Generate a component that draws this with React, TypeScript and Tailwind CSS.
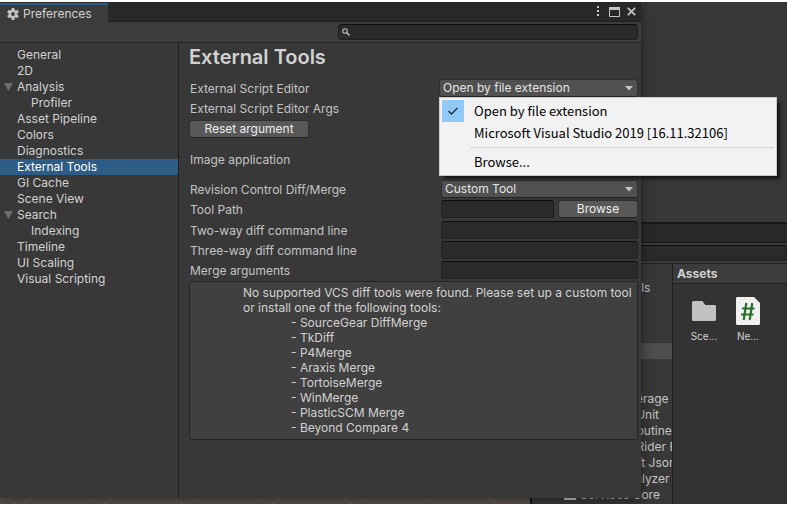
import type { ReactNode } from "react";

const sections: { name: string; nested?: boolean; open?: boolean; current?: boolean }[] = [
  { name: "General" },
  { name: "2D" },
  { name: "Analysis", open: true },
  { name: "Profiler", nested: true },
  { name: "Asset Pipeline" },
  { name: "Colors" },
  { name: "Diagnostics" },
  { name: "External Tools", current: true },
  { name: "GI Cache" },
  { name: "Scene View" },
  { name: "Search", open: true },
  { name: "Indexing", nested: true },
  { name: "Timeline" },
  { name: "UI Scaling" },
  { name: "Visual Scripting" },
];

const diffTools = [
  "SourceGear DiffMerge",
  "TkDiff",
  "P4Merge",
  "Araxis Merge",
  "TortoiseMerge",
  "WinMerge",
  "PlasticSCM Merge",
  "Beyond Compare 4",
];

const packages = [
  "Code Coverage",
  "Custom NUnit",
  "Editor Coroutines",
  "JetBrains Rider Editor",
  "Newtonsoft Json",
  "Profile Analyzer",
  "Services Core",
];

const fieldClass =
  "block h-[18px] w-full min-w-0 rounded-[3px] border border-[#212121] border-t-[#0d0d0d] bg-[#2a2a2a] px-1 text-[#d2d2d2] outline-none";
const buttonClass =
  "block h-[18px] rounded-[3px] border border-[#303030] border-b-[#242424] bg-[#585858] text-center leading-4 text-[#eeeeee]";

function GearIcon() {
  return (
    <svg className="size-3" viewBox="0 0 12 12" aria-hidden="true">
      <g fill="#c4c4c4">
        <rect x="4.6" y="0" width="2.8" height="12" rx=".5" />
        <rect x="4.6" y="0" width="2.8" height="12" rx=".5" transform="rotate(60 6 6)" />
        <rect x="4.6" y="0" width="2.8" height="12" rx=".5" transform="rotate(120 6 6)" />
        <circle cx="6" cy="6" r="4.4" />
      </g>
      <circle cx="6" cy="6" r="1.9" fill="#3c3c3c" />
    </svg>
  );
}

function FolderIcon({ className }: { className: string }) {
  return (
    <svg className={className} viewBox="0 0 24 20" aria-hidden="true">
      <path d="M1.5 0h8.2c.5 0 .8.1 1.1.5L13.3 4H22.500c.8 0 1.500.7 1.500 1.500v13c0 .8-.7 1.500-1.500 1.500h-21C.7 20 0 19.300 0 18.500v-17C0 .7.7 0 1.500 0Z" fill="#c2c2c2" />
    </svg>
  );
}

function ScriptIcon() {
  return (
    <svg className="h-7 w-6" viewBox="0 0 24 28" aria-hidden="true">
      <path d="M1.500 0H18l6 6v20.500c0 .8-.7 1.500-1.500 1.500h-21C.7 28 0 27.300 0 26.500v-25C0 .7.7 0 1.500 0Z" fill="#f0f0f0" />
      <path d="M10.300 6 7.700 23M16.300 6l-2.600 17M6 11.500h12.500M5 17.500h12.500" stroke="#2a6e2c" strokeWidth="2.200" fill="none" />
    </svg>
  );
}

function Dropdown({ id, value }: { id: string; value: string }) {
  return (
    <div className="relative">
      <select
        id={id}
        className="block h-[18px] w-full appearance-none rounded-[3px] border border-[#303030] border-b-[#242424] bg-[#515151] pl-[3px] leading-4 text-[#e4e4e4] outline-none"
      >
        <option>{value}</option>
      </select>
      <svg className="pointer-events-none absolute top-[7px] right-[5px] h-[5px] w-2" viewBox="0 0 8 5" aria-hidden="true">
        <path d="M0 0h8L4 4.500Z" fill="#c4c4c4" />
      </svg>
    </div>
  );
}

function Row({ label, htmlFor, children }: { label: string; htmlFor?: string; children?: ReactNode }) {
  return (
    <div className="flex h-5 items-start leading-5">
      {htmlFor ? (
        <label htmlFor={htmlFor} className="w-[252px] shrink-0 pl-px">{label}</label>
      ) : (
        <span className="w-[252px] shrink-0 pl-px">{label}</span>
      )}
      <div className="min-w-0 flex-1">{children}</div>
    </div>
  );
}

function EditorMenu() {
  return (
    <div
      role="menu"
      className="absolute top-full left-0 z-10 w-[338px] border border-[#cccccc] bg-[#f2f2f2] p-[2px] font-['Noto_Sans_CJK_SC',sans-serif] text-[13px] leading-[22px] text-black shadow-[4px_4px_3px_-1px_rgba(0,0,0,0.6)]"
    >
      <button role="menuitem" className="flex h-[22px] w-full items-center text-left">
        <span className="mr-[10px] flex size-[22px] items-center justify-center bg-[#91c9f7]">
          <svg className="size-3" viewBox="0 0 12 12" aria-hidden="true">
            <path d="m1.500 6 3 3 6-6" fill="none" stroke="#1f2d3a" strokeWidth="1.400" />
          </svg>
        </span>
        Open by file extension
      </button>
      <button role="menuitem" className="block h-[22px] w-full pl-8 text-left">
        Microsoft Visual Studio 2019 [16.11.32106]
      </button>
      <hr className="my-[3px] ml-7 border-[#d7d7d7]" />
      <button role="menuitem" className="block h-[22px] w-full pl-8 text-left">Browse...</button>
    </div>
  );
}

function PreferencesWindow() {
  return (
    <div className="absolute top-0 right-[146px] bottom-[6px] left-0 flex flex-col bg-[#383838] shadow-[0_2px_12px_rgba(0,0,0,0.45)]">
      <div className="flex h-5 shrink-0 items-stretch border-b border-[#1f1f1f] bg-[#282828]">
        <div className="mt-px -mb-px flex w-[108px] items-center gap-1 border-t-2 border-[#2c5d87] bg-[#3c3c3c] pl-[7px] text-[#d2d2d2]">
          <GearIcon />
          Preferences
        </div>
        <div className="ml-auto flex items-center gap-[7px] pr-[5px]">
          <button aria-label="Options">
            <svg className="h-[11px] w-[5px]" viewBox="0 0 5 11" fill="#c4c4c4" aria-hidden="true">
              <path d="M0 0h2v2H0zM0 4h2v2H0zM0 8h2v2H0z" />
            </svg>
          </button>
          <button aria-label="Maximize">
            <svg className="h-[10px] w-[11px]" viewBox="0 0 11 10" aria-hidden="true">
              <path d="M.5.500h10v9H.5z" fill="none" stroke="#c4c4c4" />
              <path d="M0 0h11v3H0z" fill="#c4c4c4" />
            </svg>
          </button>
          <button aria-label="Close">
            <svg className="size-[9px]" viewBox="0 0 9 9" aria-hidden="true">
              <path d="m.8.800 7.400 7.400M8.200.800.800 8.200" stroke="#c4c4c4" strokeWidth="1.700" />
            </svg>
          </button>
        </div>
      </div>

      <div className="flex h-[21px] shrink-0 items-start justify-end border-b border-[#232323] bg-[#3c3c3c] pt-[2px] pr-[3px]">
        <div className="relative w-[300px]">
          <input
            aria-label="Search preferences"
            className="block h-4 w-full rounded-[4px] border border-[#212121] border-t-[#0d0d0d] bg-[#2a2a2a] pl-4 text-[#d2d2d2] outline-none"
          />
          <svg className="absolute top-1 left-1 size-2" viewBox="0 0 8 8" fill="none" stroke="#c4c4c4" aria-hidden="true">
            <circle cx="3" cy="3" r="2.200" strokeWidth="1.100" />
            <path d="m4.700 4.700 2.800 2.800" strokeWidth="1.400" />
          </svg>
        </div>
      </div>

      <div className="flex min-h-0 flex-1">
        <nav className="w-[179px] shrink-0 border-r border-[#1f1f1f] pt-1 text-[#d2d2d2]">
          {sections.map((s) => (
            <a
              key={s.name}
              href="#"
              className={`flex h-4 items-center ${s.current ? "bg-[#2c5d87] text-white" : ""} ${s.nested ? "pl-[31px]" : s.open ? "pl-1" : "pl-[17px]"}`}
            >
              {s.open && (
                <svg className="mr-1 h-2 w-[9px]" viewBox="0 0 9 8" aria-hidden="true">
                  <path d="M0 0h9L4.500 8Z" fill="#6d6d6d" />
                </svg>
              )}
              {s.name}
            </a>
          ))}
        </nav>

        <main className="min-w-0 flex-1 pr-[3px] pl-[10px] text-[#c4c4c4]">
          <h1 className="pt-[2px] text-[20px] leading-6 font-semibold text-[#d2d2d2]">External Tools</h1>
          <div className="mt-[10px] flex h-5 items-start leading-5">
            <label htmlFor="editor" className="w-[250px] shrink-0 pl-px">External Script Editor</label>
            <div className="relative min-w-0 flex-1">
              <Dropdown id="editor" value="Open by file extension" />
              <EditorMenu />
            </div>
          </div>
          <Row label="External Script Editor Args" />
          <button className={`${buttonClass} mt-px w-[120px]`}>Reset argument</button>
          <div className="mt-3">
            <Row label="Image application" />
          </div>
          <div className="mt-[10px]">
            <Row label="Revision Control Diff/Merge" htmlFor="merge-tool">
              <Dropdown id="merge-tool" value="Custom Tool" />
            </Row>
            <Row label="Tool Path" htmlFor="tool-path">
              <div className="flex gap-1">
                <input id="tool-path" className={fieldClass} />
                <button className={`${buttonClass} w-20 shrink-0`}>Browse</button>
              </div>
            </Row>
          </div>
          <div className="mt-px">
            <Row label="Two-way diff command line" htmlFor="two-way">
              <input id="two-way" className={fieldClass} />
            </Row>
            <Row label="Three-way diff command line" htmlFor="three-way">
              <input id="three-way" className={fieldClass} />
            </Row>
            <Row label="Merge arguments" htmlFor="merge-args">
              <input id="merge-args" className={fieldClass} />
            </Row>
          </div>
          <div className="rounded-[3px] border border-[#232323] bg-[#404040] pt-[3px] pb-1 pl-[53px] leading-[15px] text-[#d2d2d2]">
            <p>No supported VCS diff tools were found. Please set up a custom tool or install one of the following tools:</p>
            <ul className="pl-12">
              {diffTools.map((t) => (
                <li key={t}>- {t}</li>
              ))}
            </ul>
          </div>
        </main>
      </div>
    </div>
  );
}

function ProjectBrowser() {
  return (
    <div className="flex min-h-0 flex-1">
      <div className="w-[141px] shrink-0 overflow-hidden border-r border-[#1f1f1f] whitespace-nowrap text-[#c4c4c4]">
        <div className="mt-4 mb-[47px] h-4 pl-[49px] leading-4">All Materials</div>
        <div className="mb-8 h-4 bg-[#4d4d4d]" />
        {packages.map((p) => (
          <div key={p} className="flex h-4 items-center pl-8">
            <FolderIcon className="mr-1 h-[10px] w-3 shrink-0" />
            {p}
          </div>
        ))}
      </div>
      <div className="min-w-0 flex-1 bg-[#333333] text-[#d2d2d2]">
        <h2 className="h-5 border-b border-[#232323] bg-[#3c3c3c] pl-1 leading-5 font-bold">Assets</h2>
        <div className="flex gap-5 pt-[13px] pl-[19px] text-[10px]">
          <figure className="flex w-6 flex-col items-center">
            <div className="flex h-7 items-center">
              <FolderIcon className="h-5 w-6" />
            </div>
            <figcaption className="mt-[3px]">Sce...</figcaption>
          </figure>
          <figure className="flex w-6 flex-col items-center">
            <ScriptIcon />
            <figcaption className="mt-[3px]">Ne...</figcaption>
          </figure>
        </div>
      </div>
    </div>
  );
}

export default function App() {
  return (
    <div className="h-screen bg-white pt-[2px] pb-px font-['Inter',sans-serif] text-[12px] leading-4">
      <div className="relative flex h-full overflow-hidden bg-[#383838]">
        <div className="flex w-[532px] shrink-0 flex-col justify-end border-r-2 border-[#191919]">
          <svg className="block h-2 w-full bg-[#59504b]" viewBox="0 0 530 8" preserveAspectRatio="none" aria-hidden="true">
            <path d="m4 0 12 8M34 0 22 8m66-8 12 8m16-8-12 8m68-8 12 8m16-8-12 8m68-8 12 8m16-8-12 8m68-8 12 8m16-8-12 8m68-8 12 8m50-8 12 8" stroke="#6a625d" fill="none" />
          </svg>
        </div>
        <div className="flex min-w-0 flex-1 flex-col">
          <div className="h-[220px] shrink-0" />
          <div className="h-[21px] shrink-0 border-t-2 border-b border-[#191919] bg-[#282828]" />
          <div className="flex h-[21px] shrink-0 flex-col border-b border-[#232323] bg-[#3c3c3c] pt-[2px]">
            <div className="h-4 border border-[#212121] border-t-[#0d0d0d] bg-[#2a2a2a]" />
          </div>
          <ProjectBrowser />
        </div>
        <PreferencesWindow />
      </div>
    </div>
  );
}
